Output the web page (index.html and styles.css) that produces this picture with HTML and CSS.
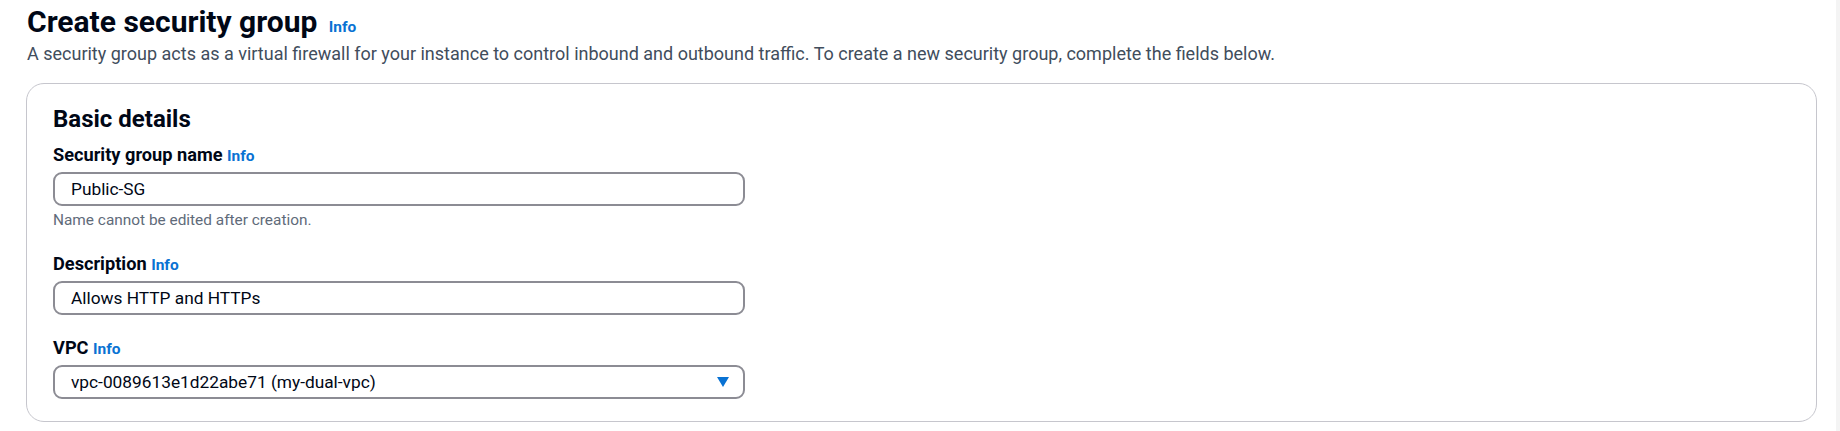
FILE: index.html
```html
<!DOCTYPE html>
<html lang="en">
<head>
<meta charset="utf-8">
<title>Create security group</title>
<link rel="stylesheet" href="styles.css">
</head>
<body>
<div class="shell">
  <main class="page">
    <header class="page-header">
      <h1 class="title">Create security group <a class="info info-lg" href="#">Info</a></h1>
      <p class="lead">A security group acts as a virtual firewall for your instance to control inbound and outbound traffic. To create a new security group, complete the fields below.</p>
    </header>
    <section class="card">
      <h2 class="card-title">Basic details</h2>
      <div class="fields">
        <div class="field">
          <label class="label">Security group name <a class="info" href="#">Info</a></label>
          <div class="input">Public-SG</div>
          <div class="hint">Name cannot be edited after creation.</div>
        </div>
        <div class="field">
          <label class="label">Description <a class="info" href="#">Info</a></label>
          <div class="input">Allows HTTP and HTTPs</div>
        </div>
        <div class="field">
          <label class="label">VPC <a class="info" href="#">Info</a></label>
          <div class="input select">
            <span>vpc-0089613e1d22abe71 (my-dual-vpc)</span>
            <svg class="caret" width="12" height="10" viewBox="0 0 12 10"><path d="M0 0H12L6 10Z" fill="#0972d3"/></svg>
          </div>
        </div>
      </div>
    </section>
  </main>
  <div class="scroll-strip"></div>
</div>
</body>
</html>
```
FILE: styles.css
```css
html, body {
  margin: 0;
  padding: 0;
  background: #ffffff;
}
body {
  font-family: Roboto, "Noto Sans", "Liberation Sans", sans-serif;
  color: #000716;
}
.shell {
  display: flex;
  min-height: 431px;
}
.page {
  flex: 1;
  padding: 0 19px 0 26px;
}
.scroll-strip {
  width: 4px;
  background: #f4f4f4;
}
.page-header {
  padding-top: 4px;
}
.title {
  margin: 0;
  font-size: 30px;
  line-height: 36px;
  font-weight: 700;
  color: #000716;
  padding-left: 1px;
}
.info {
  color: #0972d3;
  text-decoration: none;
  font-weight: 700;
  font-size: 15.5px;
  line-height: 1;
  letter-spacing: 0;
}
.info-lg {
  margin-left: 4px;
}
.lead {
  margin: 3px 0 0 1px;
  font-size: 18px;
  line-height: 22px;
  color: #414d5c;
}
.card {
  margin-top: 18px;
  border: 1px solid #c6c6cd;
  border-radius: 18px;
  padding: 21px 26px 22px 26px;
}
.card-title {
  margin: 0;
  font-size: 24px;
  line-height: 28px;
  font-weight: 700;
  color: #000716;
}
.fields {
  margin-top: 11px;
  display: flex;
  flex-direction: column;
  gap: 22px;
}
.field {
  display: flex;
  flex-direction: column;
}
.label {
  font-size: 18.2px;
  line-height: 22px;
  font-weight: 700;
  color: #000716;
  margin-bottom: 6px;
}
.input {
  box-sizing: border-box;
  width: 692px;
  height: 34px;
  border: 2px solid #8c8c94;
  border-radius: 9px;
  padding: 0 16px;
  display: flex;
  align-items: center;
  font-size: 17.3px;
  color: #000716;
}
.select {
  justify-content: space-between;
  padding-right: 14px;
}
.caret {
  display: block;
}
.hint {
  margin-top: 4px;
  font-size: 15.4px;
  line-height: 21px;
  color: #5f6b7a;
}
```
